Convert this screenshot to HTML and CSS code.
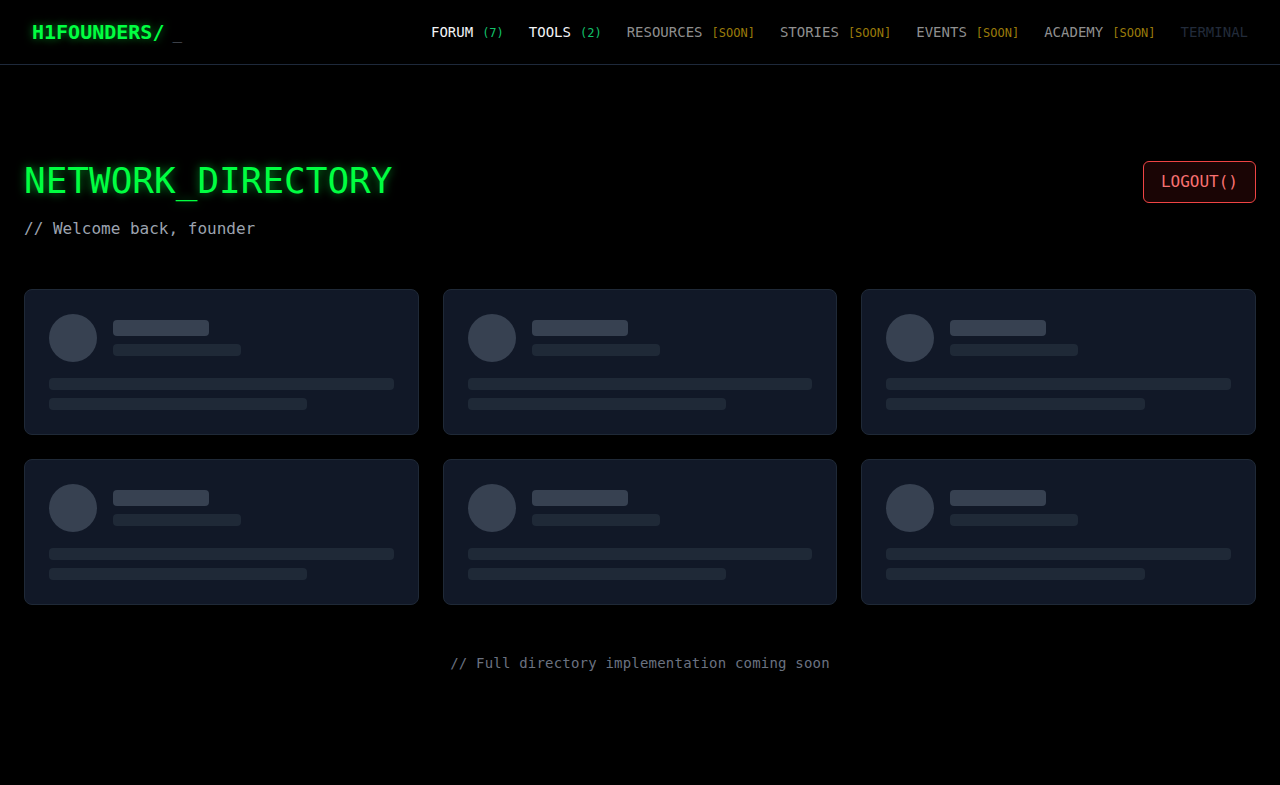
FILE: index.html
```html
<!DOCTYPE html>
<html lang="en">
<head>
<meta charset="utf-8">
<title>H1FOUNDERS — Network Directory</title>
<link rel="stylesheet" href="styles.css">
</head>
<body>
<header class="topbar">
  <div class="logo">H1FOUNDERS/<span class="cursor">_</span></div>
  <nav class="nav">
    <a class="nav-item active">FORUM<span class="count">(7)</span></a>
    <a class="nav-item active">TOOLS<span class="count">(2)</span></a>
    <a class="nav-item">RESOURCES<span class="soon">[SOON]</span></a>
    <a class="nav-item">STORIES<span class="soon">[SOON]</span></a>
    <a class="nav-item">EVENTS<span class="soon">[SOON]</span></a>
    <a class="nav-item">ACADEMY<span class="soon">[SOON]</span></a>
    <a class="nav-item dim">TERMINAL</a>
  </nav>
</header>
<main class="main">
  <div class="page-head">
    <div>
      <h1 class="title">NETWORK_DIRECTORY</h1>
      <p class="subtitle">// Welcome back, founder</p>
    </div>
    <button class="logout">LOGOUT()</button>
  </div>
  <section class="grid">
    <div class="card"><div class="card-top"><div class="avatar"></div><div class="bars"><div class="bar name"></div><div class="bar role"></div></div></div><div class="bar line"></div><div class="bar line short"></div></div>
    <div class="card"><div class="card-top"><div class="avatar"></div><div class="bars"><div class="bar name"></div><div class="bar role"></div></div></div><div class="bar line"></div><div class="bar line short"></div></div>
    <div class="card"><div class="card-top"><div class="avatar"></div><div class="bars"><div class="bar name"></div><div class="bar role"></div></div></div><div class="bar line"></div><div class="bar line short"></div></div>
    <div class="card"><div class="card-top"><div class="avatar"></div><div class="bars"><div class="bar name"></div><div class="bar role"></div></div></div><div class="bar line"></div><div class="bar line short"></div></div>
    <div class="card"><div class="card-top"><div class="avatar"></div><div class="bars"><div class="bar name"></div><div class="bar role"></div></div></div><div class="bar line"></div><div class="bar line short"></div></div>
    <div class="card"><div class="card-top"><div class="avatar"></div><div class="bars"><div class="bar name"></div><div class="bar role"></div></div></div><div class="bar line"></div><div class="bar line short"></div></div>
  </section>
  <p class="footnote">// Full directory implementation coming soon</p>
</main>
</body>
</html>
```
FILE: styles.css
```css
* { box-sizing: border-box; }
html, body { margin: 0; padding: 0; }
body {
  background: #000;
  color: #e5e7eb;
  font-family: "DejaVu Sans Mono", "Liberation Mono", monospace;
  min-height: 785px;
}
.topbar {
  height: 65px;
  border-bottom: 1px solid #1e293b;
  display: flex;
  align-items: center;
  justify-content: space-between;
  padding: 0 32px;
}
.logo {
  font-size: 20px;
  font-weight: bold;
  color: #00ff41;
  text-shadow: 0 0 8px rgba(0, 255, 65, 0.55);
}
.cursor {
  color: #6b7280;
  font-weight: normal;
  font-size: 16px;
  margin-left: 8px;
  text-shadow: none;
}
.nav {
  display: flex;
  align-items: baseline;
  gap: 25px;
}
.nav-item {
  font-size: 14px;
  color: #8f8f8f;
  white-space: nowrap;
}
.nav-item.active { color: #f3f4f6; }
.nav-item.dim { color: #222b3a; }
.count, .soon {
  font-size: 12px;
  margin-left: 9px;
}
.count { color: #12c26b; }
.soon { color: #9a7b0a; }
.main {
  padding: 96px 24px 40px;
}
.page-head {
  display: flex;
  justify-content: space-between;
  align-items: flex-start;
}
.title {
  margin: 0;
  font-size: 36px;
  line-height: 40px;
  font-weight: normal;
  color: #00ff41;
  text-shadow: 0 0 10px rgba(0, 255, 65, 0.6);
}
.subtitle {
  margin: 16px 0 0;
  font-size: 16px;
  line-height: 24px;
  color: #9ca3af;
}
.logout {
  font-family: inherit;
  font-size: 16px;
  line-height: 24px;
  padding: 8px 17px;
  color: #f87171;
  background: #1a0505;
  border: 1px solid #ef4444;
  border-radius: 6px;
  cursor: pointer;
}
.grid {
  margin-top: 48px;
  display: grid;
  grid-template-columns: repeat(3, 1fr);
  gap: 24px;
}
.card {
  background: #111827;
  border: 1px solid #1f2937;
  border-radius: 8px;
  padding: 24px;
}
.card-top {
  display: flex;
  align-items: center;
  gap: 16px;
  margin-bottom: 16px;
}
.avatar {
  width: 48px;
  height: 48px;
  border-radius: 50%;
  background: #374151;
}
.bars { display: flex; flex-direction: column; gap: 8px; }
.bar { border-radius: 4px; }
.bar.name { width: 96px; height: 16px; background: #374151; }
.bar.role { width: 128px; height: 12px; background: #1f2937; }
.bar.line { height: 12px; background: #1f2937; }
.bar.line + .bar.line { margin-top: 8px; }
.bar.line.short { width: 75%; }
.footnote {
  margin: 48px 0 0;
  text-align: center;
  font-size: 14px;
  line-height: 20px;
  color: #6b7280;
  letter-spacing: 0.2px;
}
```
